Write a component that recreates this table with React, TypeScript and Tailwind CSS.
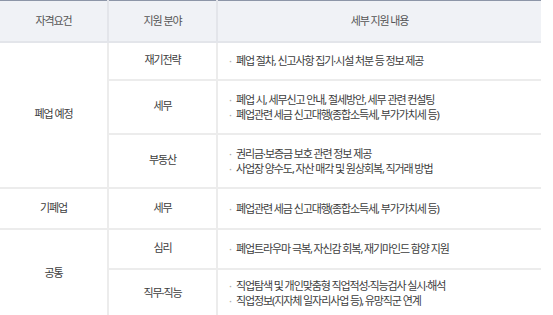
const rows = [
  {
    group: "폐업 예정",
    span: 3,
    field: "재기전략",
    h: "h-[38px]",
    items: ["폐업 절차, 신고사항 집기·시설 처분 등 정보 제공"],
  },
  {
    field: "세무",
    h: "h-[54px]",
    items: [
      "폐업 시, 세무신고 안내, 절세방안, 세무 관련 컨설팅",
      "폐업관련 세금 신고대행(종합소득세, 부가가치세 등)",
    ],
  },
  {
    field: "부동산",
    h: "h-[54px]",
    items: [
      "권리금·보증금 보호 관련 정보 제공",
      "사업장 양수도, 자산 매각 및 원상회복, 직거래 방법",
    ],
  },
  {
    group: "기폐업",
    span: 1,
    field: "세무",
    h: "h-[41px]",
    items: ["폐업관련 세금 신고대행(종합소득세, 부가가치세 등)"],
  },
  {
    group: "공통",
    span: 2,
    field: "심리",
    h: "h-[40px]",
    items: ["폐업트라우마 극복, 자신감 회복, 재기마인드 함양 지원"],
  },
  {
    field: "직무·직능",
    h: "h-[49px]",
    items: [
      "직업탐색 및 개인맞춤형 직업적성·직능검사 실시·해석",
      "직업정보(지자체 일자리사업 등), 유망직군 연계",
    ],
  },
];

export default function App() {
  return (
    <div className="w-[553px] h-[315px] overflow-hidden bg-white font-['Noto_Sans','Noto_Sans_CJK_KR',sans-serif] text-[11px] tracking-[-0.1em] text-[#3d3d3d]">
      <table className="w-[541px] table-fixed border-collapse">
        <colgroup>
          <col className="w-[108px]" />
          <col className="w-[109px]" />
          <col />
        </colgroup>
        <thead>
          <tr className="h-[41px] bg-[#f0f2f6] border-t border-t-[#8d96a8] text-[#555]">
            <th className="font-normal border-b-2 border-r-2 border-[#e3e5ea] border-t-[#8d96a8]">자격요건</th>
            <th className="font-normal border-b-2 border-r-2 border-[#e3e5ea] border-t-[#8d96a8]">지원 분야</th>
            <th className="font-normal border-b-2 border-[#e3e5ea] border-t-[#8d96a8]">세부 지원 내용</th>
          </tr>
        </thead>
        <tbody>
          {rows.map((r, i) => (
            <tr key={i} className={r.h}>
              {r.group && (
                <td
                  rowSpan={r.span}
                  className="text-center align-middle border-b-2 border-r-2 border-[#ececec]"
                >
                  {r.group}
                </td>
              )}
              <td className="text-center align-middle border-b-2 border-r-2 border-[#ececec]">
                {r.field}
              </td>
              <td className="align-middle border-b-2 border-[#ececec] pl-[11px]">
                {r.items.map((t, j) => (
                  <div key={j} className="flex leading-[15px]">
                    <span className="w-[7px] text-[#aaa]">·</span>
                    <span>{t}</span>
                  </div>
                ))}
              </td>
            </tr>
          ))}
        </tbody>
      </table>
    </div>
  );
}
